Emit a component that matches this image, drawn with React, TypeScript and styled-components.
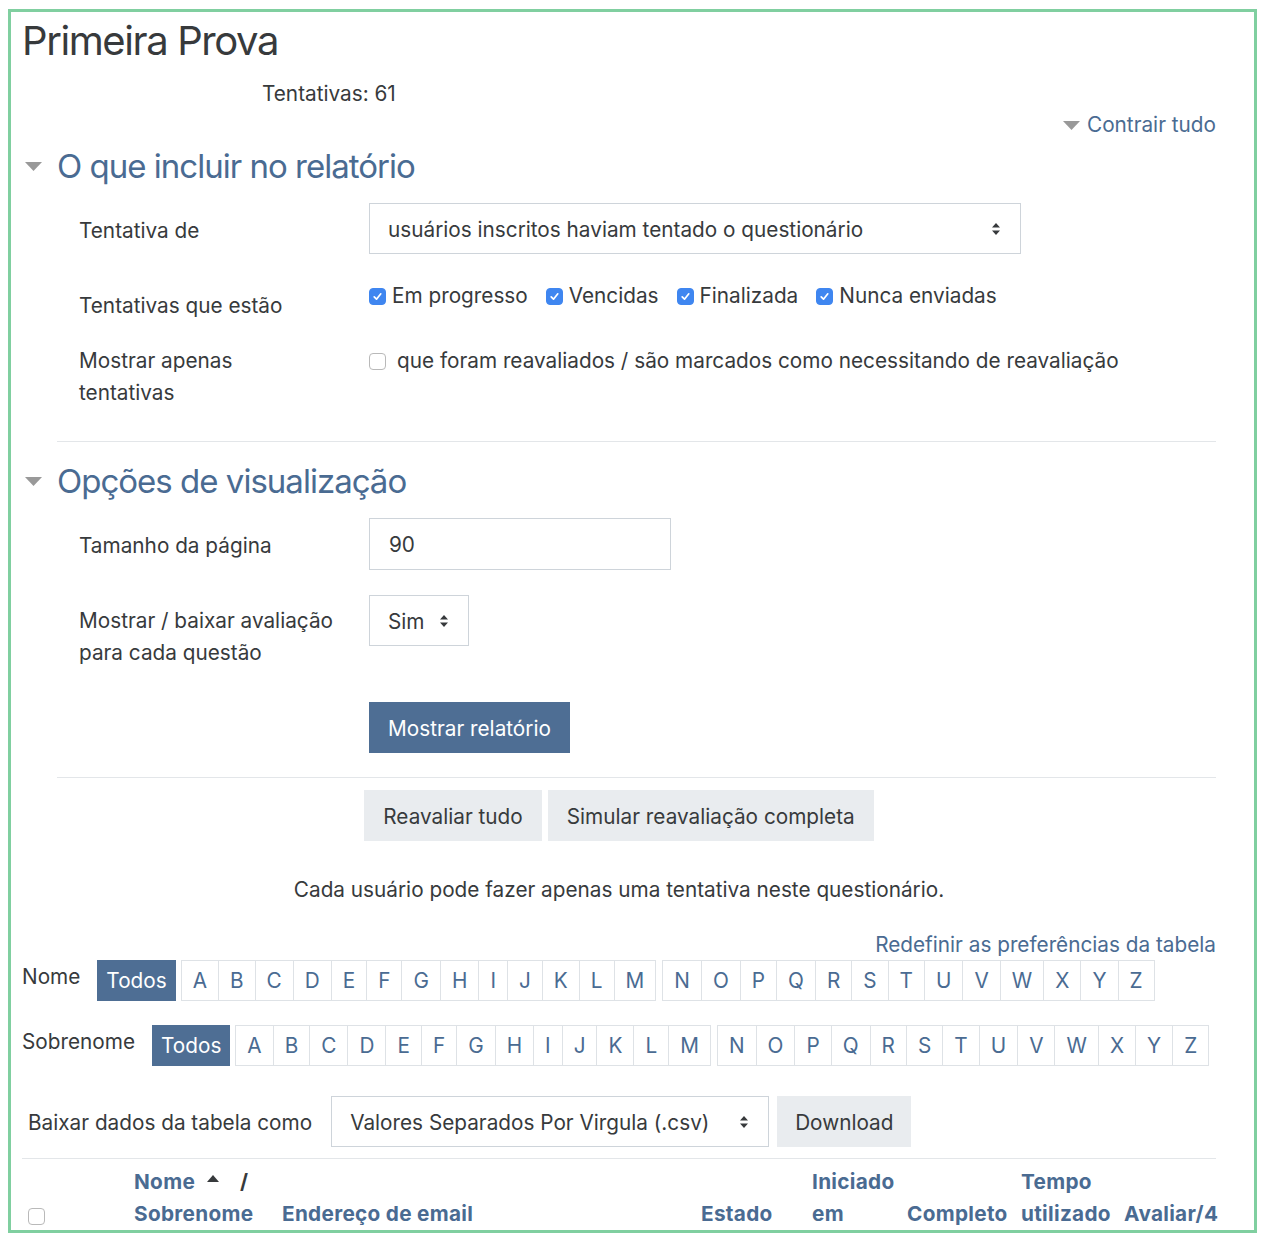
import React from "react";
import styled, { createGlobalStyle } from "styled-components";

const LINK = "#4a6b92";
const PRIMARY = "#4e6e94";
const TEXT = "#373a3c";

const Global = createGlobalStyle`
  html, body { margin: 0; padding: 0; background: #fff; }
  body {
    font-family: Inter, Roboto, "Liberation Sans", sans-serif;
    color: ${TEXT};
    font-size: 20.75px;
    line-height: 32px;
  }
  * { box-sizing: border-box; }
`;

const Frame = styled.div`
  margin: 9px 0 0 8px;
  width: 1249px;
  height: 1224px;
  border: 3px solid #80cfa0;
  padding: 0 38px 0 11px;
  overflow: hidden;
`;

const Title = styled.h1`
  margin: 5px 0 0;
  font-size: 40px;
  line-height: 48px;
  font-weight: 400;
  letter-spacing: -0.035em;
  color: ${TEXT};
`;

const Attempts = styled.div`
  margin-top: 13px;
  padding-left: 240px;
`;

const CollapseAll = styled.div`
  margin-top: -1px;
  display: flex;
  justify-content: flex-end;
  align-items: center;
  gap: 7px;
  color: ${LINK};
`;

const Caret = styled.svg`
  display: block;
  flex: none;
`;

const Legend = styled.div<{ $mt: number }>`
  margin-top: ${(p) => p.$mt}px;
  display: flex;
  align-items: center;
  gap: 15px;
  padding-left: 3px;
  font-size: 33px;
  line-height: 40px;
  letter-spacing: -0.03em;
  color: ${LINK};
`;

const FormRow = styled.div<{ $mt: number }>`
  margin-top: ${(p) => p.$mt}px;
  padding-left: 57px;
  display: grid;
  grid-template-columns: 290px 1fr;
  align-items: start;
`;

const Label = styled.div<{ $pt?: number; $center?: boolean }>`
  padding-top: ${(p) => p.$pt ?? 0}px;
  align-self: ${(p) => (p.$center ? "center" : "start")};
`;

const SelectBox = styled.div<{ $w: number }>`
  width: ${(p) => p.$w}px;
  height: 51px;
  border: 1px solid #ced4da;
  background: #fff;
  display: flex;
  align-items: center;
  justify-content: space-between;
  padding: 2px 19px 0 18px;
  color: ${TEXT};
`;

const TextInput = styled.div`
  width: 302px;
  height: 52px;
  border: 1px solid #ced4da;
  display: flex;
  align-items: center;
  padding: 2px 0 0 19px;
`;

const CheckGroup = styled.div`
  display: flex;
  align-items: center;
  gap: 18px;
`;

const CheckItem = styled.label<{ $gap?: number }>`
  display: flex;
  align-items: center;
  gap: ${(p) => p.$gap ?? 6}px;
`;

const Box = styled.span<{ $checked?: boolean }>`
  width: 17px;
  height: 17px;
  border-radius: 4px;
  flex: none;
  display: flex;
  align-items: center;
  justify-content: center;
  background: ${(p) => (p.$checked ? "#3f86f0" : "#fff")};
  border: 1px solid ${(p) => (p.$checked ? "#3f86f0" : "#b9b9b9")};
`;

const Rule = styled.hr<{ $mt: number; $ml?: number }>`
  margin: ${(p) => p.$mt}px 0 0 ${(p) => p.$ml ?? 0}px;
  border: 0;
  border-top: 1px solid #e3e6e9;
  height: 0;
`;

const Button = styled.button<{ $primary?: boolean }>`
  height: 51px;
  padding: 2px 18px 0;
  border: 1px solid ${(p) => (p.$primary ? PRIMARY : "#e9ecef")};
  background: ${(p) => (p.$primary ? PRIMARY : "#e9ecef")};
  color: ${(p) => (p.$primary ? "#fff" : TEXT)};
  font-family: inherit;
  font-size: 20.75px;
  line-height: 32px;
  cursor: pointer;
`;

const ButtonRow = styled.div<{ $mt: number }>`
  margin-top: ${(p) => p.$mt}px;
  display: flex;
  justify-content: center;
  gap: 6px;
`;

const Notice = styled.div`
  margin-top: 33px;
  text-align: center;
`;

const ResetLink = styled.div`
  margin-top: 23px;
  text-align: right;
  color: ${LINK};
`;

const InitialsRow = styled.div<{ $mt: number }>`
  margin-top: ${(p) => p.$mt}px;
  display: flex;
  align-items: flex-start;
`;

const InitialsLabel = styled.div`
  margin-right: 17px;
  padding-top: 1px;
`;

const Letters = styled.div<{ $ml: number }>`
  display: flex;
  margin-left: ${(p) => p.$ml}px;
`;

const Letter = styled.span<{ $active?: boolean }>`
  height: 41px;
  padding: 1px ${(p) => (p.$active ? 8 : 11)}px 0;
  display: flex;
  align-items: center;
  border: 1px solid ${(p) => (p.$active ? PRIMARY : "#dee2e6")};
  background: ${(p) => (p.$active ? PRIMARY : "#fff")};
  color: ${(p) => (p.$active ? "#fff" : LINK)};
  & + & {
    margin-left: -1px;
  }
`;

const DownloadRow = styled.div`
  margin-top: 30px;
  display: flex;
  align-items: center;
  padding-left: 6px;
`;

const DownloadLabel = styled.div`
  margin-right: 19px;
  padding-top: 2px;
`;

const DownloadButton = styled(Button)`
  margin-left: 8px;
  padding: 2px 17px 0;
`;

const HeaderGrid = styled.div`
  padding-top: 7px;
  display: grid;
  grid-template-columns: 112px 148px 419px 111px 95px 114px 103px 92px;
  align-items: end;
`;

const Th = styled.div`
  font-weight: 700;
  letter-spacing: 0.3px;
  color: ${LINK};
  white-space: nowrap;
`;

const CheckCell = styled.div`
  padding: 0 0 5px 6px;
`;

const Slash = styled.span`
  color: ${TEXT};
  margin-left: 21px;
`;

const SortIcon = styled.svg`
  margin-left: 12px;
  vertical-align: 7px;
`;

const DownCaret = () => (
  <Caret width="17" height="9" viewBox="0 0 17 9">
    <path d="M0 0 H17 L8.5 9 Z" fill="#999" />
  </Caret>
);

const UpDown = () => (
  <svg width="10" height="16" viewBox="0 0 10 16" style={{ flex: "none", marginTop: -2 }}>
    <path d="M1 6.6 L5 2 L9 6.6 Z M1 9.4 L5 14 L9 9.4 Z" fill="#373a3c" />
  </svg>
);

const Check = () => (
  <svg width="11" height="11" viewBox="0 0 11 11">
    <path d="M2.2 5.8 L4.5 8.2 L8.8 2.8" fill="none" stroke="#fff" strokeWidth="1.7" strokeLinecap="round" strokeLinejoin="round" />
  </svg>
);

const ALPHA_1 = "ABCDEFGHIJKLM".split("");
const ALPHA_2 = "NOPQRSTUVWXYZ".split("");

const InitialsBar = ({ label, mt }: { label: string; mt: number }) => (
  <InitialsRow $mt={mt}>
    <InitialsLabel>{label}</InitialsLabel>
    <Letter $active>Todos</Letter>
    <Letters $ml={5}>
      {ALPHA_1.map((l) => (
        <Letter key={l}>{l}</Letter>
      ))}
    </Letters>
    <Letters $ml={6}>
      {ALPHA_2.map((l) => (
        <Letter key={l}>{l}</Letter>
      ))}
    </Letters>
  </InitialsRow>
);

export default function App() {
  return (
    <>
      <Global />
      <Frame>
        <Title>Primeira Prova</Title>
        <Attempts>Tentativas: 61</Attempts>
        <CollapseAll>
          <DownCaret />
          <span>Contrair tudo</span>
        </CollapseAll>

        <Legend $mt={5}>
          <DownCaret />
          <span>O que incluir no relatório</span>
        </Legend>
        <FormRow $mt={17}>
          <Label $center $pt={4}>
            Tentativa de
          </Label>
          <SelectBox $w={652}>
            <span>usuários inscritos haviam tentado o questionário</span>
            <UpDown />
          </SelectBox>
        </FormRow>
        <FormRow $mt={26}>
          <Label $pt={10}>Tentativas que estão</Label>
          <CheckGroup>
            {["Em progresso", "Vencidas", "Finalizada", "Nunca enviadas"].map((t) => (
              <CheckItem key={t}>
                <Box $checked>
                  <Check />
                </Box>
                {t}
              </CheckItem>
            ))}
          </CheckGroup>
        </FormRow>
        <FormRow $mt={23}>
          <Label>
            Mostrar apenas
            <br />
            tentativas
          </Label>
          <CheckGroup>
            <CheckItem $gap={11}>
              <Box />
              que foram reavaliados / são marcados como necessitando de reavaliação
            </CheckItem>
          </CheckGroup>
        </FormRow>
        <Rule $mt={32} $ml={35} />

        <Legend $mt={19}>
          <DownCaret />
          <span>Opções de visualização</span>
        </Legend>
        <FormRow $mt={17}>
          <Label $center $pt={4}>
            Tamanho da página
          </Label>
          <TextInput>90</TextInput>
        </FormRow>
        <FormRow $mt={25}>
          <Label $pt={10}>
            Mostrar / baixar avaliação
            <br />
            para cada questão
          </Label>
          <SelectBox $w={100}>
            <span>Sim</span>
            <UpDown />
          </SelectBox>
        </FormRow>
        <FormRow $mt={33}>
          <span />
          <div>
            <Button $primary>Mostrar relatório</Button>
          </div>
        </FormRow>
        <Rule $mt={24} $ml={35} />

        <ButtonRow $mt={12}>
          <Button>Reavaliar tudo</Button>
          <Button>Simular reavaliação completa</Button>
        </ButtonRow>
        <Notice>Cada usuário pode fazer apenas uma tentativa neste questionário.</Notice>
        <ResetLink>Redefinir as preferências da tabela</ResetLink>

        <InitialsBar label="Nome" mt={-1} />
        <InitialsBar label="Sobrenome" mt={24} />

        <DownloadRow>
          <DownloadLabel>Baixar dados da tabela como</DownloadLabel>
          <SelectBox $w={438}>
            <span>Valores Separados Por Virgula (.csv)</span>
            <UpDown />
          </SelectBox>
          <DownloadButton>Download</DownloadButton>
        </DownloadRow>
        <Rule $mt={11} />

        <HeaderGrid>
          <CheckCell>
            <Box />
          </CheckCell>
          <Th>
            Nome
            <SortIcon width="12" height="7" viewBox="0 0 12 7">
              <path d="M0 7 L6 0 L12 7 Z" fill="#373a3c" />
            </SortIcon>
            <Slash>/</Slash>
            <br />
            Sobrenome
          </Th>
          <Th>Endereço de email</Th>
          <Th>Estado</Th>
          <Th>
            Iniciado
            <br />
            em
          </Th>
          <Th>Completo</Th>
          <Th>
            Tempo
            <br />
            utilizado
          </Th>
          <Th>Avaliar/4</Th>
        </HeaderGrid>
      </Frame>
    </>
  );
}
